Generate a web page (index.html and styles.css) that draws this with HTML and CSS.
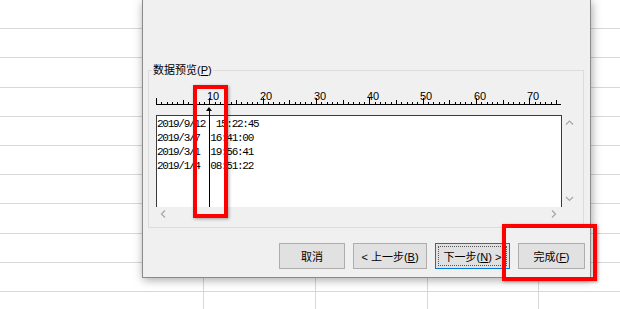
FILE: index.html
```html
<!DOCTYPE html>
<html lang="zh-CN">
<head>
    <meta charset="UTF-8">
    <meta name="viewport" content="width=device-width, initial-scale=1.0">
    <title>文本导入向导</title>
    <link rel="stylesheet" href="styles.css">
</head>
<body>

<div class="dialog">
    <fieldset class="group">
        <legend>数据预览(<u>P</u>)</legend>
        <div class="preview">
            <svg class="ruler" width="410" height="29" viewBox="0 0 410 29">
                <path class="ticks" d="M0 18.5H405
                    M5.5 16v2M11.5 16v2M16.5 16v2M21.5 16v2M32.5 16v2M37.5 16v2M43.5 16v2M48.5 16v2
                    M59.5 16v2M64.5 16v2M69.5 16v2M75.5 16v2M85.5 16v2M91.5 16v2M96.5 16v2M101.5 16v2
                    M112.5 16v2M117.5 16v2M123.5 16v2M128.5 16v2M139.5 16v2M144.5 16v2M149.5 16v2M155.5 16v2
                    M165.5 16v2M171.5 16v2M176.5 16v2M181.5 16v2M192.5 16v2M197.5 16v2M203.5 16v2M208.5 16v2
                    M219.5 16v2M224.5 16v2M229.5 16v2M235.5 16v2M245.5 16v2M251.5 16v2M256.5 16v2M261.5 16v2
                    M272.5 16v2M277.5 16v2M283.5 16v2M288.5 16v2M299.5 16v2M304.5 16v2M309.5 16v2M315.5 16v2
                    M325.5 16v2M331.5 16v2M336.5 16v2M341.5 16v2M352.5 16v2M357.5 16v2M363.5 16v2M368.5 16v2
                    M379.5 16v2M384.5 16v2M389.5 16v2M395.5 16v2
                    M27.5 14v4M80.5 14v4M133.5 14v4M187.5 14v4M240.5 14v4M293.5 14v4M347.5 14v4M400.5 14v4
                    M0.5 12v6M53.5 12v6M107.5 12v6M160.5 12v6M213.5 12v6M267.5 12v6M320.5 12v6M373.5 12v6"/>
                <text x="57" y="14">10</text>
                <text x="110" y="14">20</text>
                <text x="164" y="14">30</text>
                <text x="217" y="14">40</text>
                <text x="270" y="14">50</text>
                <text x="324" y="14">60</text>
                <text x="377" y="14">70</text>
            </svg>
            <div class="grid">
                <div class="data">
                    <div>2019/9/12  15:22:45</div>
                    <div>2019/3/7  16:41:00</div>
                    <div>2019/3/1  19:56:41</div>
                    <div>2019/1/4  08:51:22</div>
                </div>
                <div class="vscroll">
                    <svg width="18" height="92">
                        <polyline points="4,9.5 7.5,6 11,9.5"/>
                        <polyline points="4,82 7.5,85.5 11,82"/>
                    </svg>
                </div>
                <div class="hscroll">
                    <svg width="406" height="15">
                        <polyline points="9,3.5 5.5,7 9,10.5"/>
                        <polyline points="396,3.5 399.5,7 396,10.5"/>
                    </svg>
                </div>
                <div class="corner"></div>
            </div>
            <div class="break"></div>
        </div>
    </fieldset>

    <div class="buttons">
        <button class="btn btn-cancel">取消</button>
        <button class="btn btn-back">&lt; 上一步(<u>B</u>)</button>
        <button class="btn btn-next">下一步(<u>N</u>) &gt;</button>
        <button class="btn btn-finish">完成(<u>F</u>)</button>
    </div>
</div>

<div class="mark mark-col"></div>
<div class="mark mark-finish"></div>

</body>
</html>
```

FILE: styles.css
```css
html {
    background: #fff;
}
body {
    margin: 0;
    width: 620px;
    height: 309px;
    overflow: hidden;
    position: relative;
    font-family: "Liberation Sans", "Noto Sans CJK SC", sans-serif;
    background-color: #fff;
    background-image:
        linear-gradient(to right,
            transparent 203px, #d8d8d8 203px, #d8d8d8 204px, transparent 204px,
            transparent 315px, #d8d8d8 315px, #d8d8d8 316px, transparent 316px,
            transparent 427px, #d8d8d8 427px, #d8d8d8 428px, transparent 428px,
            transparent 538px, #d8d8d8 538px, #d8d8d8 539px, transparent 539px),
        repeating-linear-gradient(to bottom, transparent 0, transparent 28.2px, #d8d8d8 28.2px, #d8d8d8 29.2px);
}

/* dialog window over the sheet */
.dialog {
    position: absolute;
    left: 142px;
    top: 0;
    width: 449px;
    height: 278px;
    box-sizing: border-box;
    border: 1px solid #8a8a8a;
    border-top: 0;
    background: #f0f0f0;
    box-shadow: 1px 2px 9px rgba(0,0,0,0.35);
    padding: 63px 6px 0 5px;
}

.group {
    margin: 0;
    padding: 0 3px 5px 7px;
    border: 1px solid #dcdcdc;
    min-width: 0;
}
.group legend {
    padding: 0 1px;
    margin-left: -4px;
    font-size: 11px;
    line-height: 14px;
    color: #000;
}

.preview {
    position: relative;
    padding-top: 9px;
}
.ruler {
    display: block;
}
.ruler .ticks {
    stroke: #000;
    stroke-width: 1;
    fill: none;
}
.ruler text {
    font-family: "Liberation Sans", Arial, sans-serif;
    font-size: 11px;
    text-anchor: middle;
    fill: #000;
}

.grid {
    display: grid;
    grid-template-columns: 406px 18px;
    grid-template-rows: 92px 15px;
}
.data {
    background: #fff;
    border: 1px solid #3a3a3a;
    border-bottom: 0;
    padding-top: 1px;
    font-family: "Liberation Mono", monospace;
    font-size: 11px;
    line-height: 14px;
    letter-spacing: -1.267px;
    color: #000;
}
.data div {
    white-space: pre;
}
.vscroll svg, .hscroll svg {
    display: block;
}
.vscroll polyline, .hscroll polyline {
    fill: none;
    stroke: #a6a6a6;
    stroke-width: 1.2;
}

/* column break marker */
.break {
    position: absolute;
    left: 53px;
    top: 32px;
    width: 1px;
    height: 98px;
    background: #000;
}
.break::before {
    content: "";
    position: absolute;
    left: -3px;
    top: -2px;
    border-left: 3.5px solid transparent;
    border-right: 3.5px solid transparent;
    border-bottom: 4px solid #000;
}

.buttons {
    display: flex;
    justify-content: flex-end;
    gap: 8px;
    margin-top: 15px;
    margin-right: -1px;
}
.btn {
    height: 26px;
    box-sizing: border-box;
    border: 1px solid #adadad;
    background: #e1e1e1;
    font-family: "Liberation Sans", "Noto Sans CJK SC", sans-serif;
    font-size: 11px;
    color: #000;
    padding: 0;
}
.btn-cancel { width: 66px; }
.btn-back { width: 74px; }
.btn-next {
    width: 75px;
    border-color: #0078d7;
    outline: 1px dotted #555;
    outline-offset: -4px;
}
.btn-finish { width: 67px; }

/* red annotation boxes */
.mark {
    position: absolute;
    box-sizing: border-box;
    border: 4px solid #f00;
    box-shadow: 1px 1px 3px rgba(0,0,0,0.35);
}
.mark-col {
    left: 193px;
    top: 85px;
    width: 35px;
    height: 133px;
}
.mark-finish {
    left: 502px;
    top: 224px;
    width: 95px;
    height: 57px;
}
```
